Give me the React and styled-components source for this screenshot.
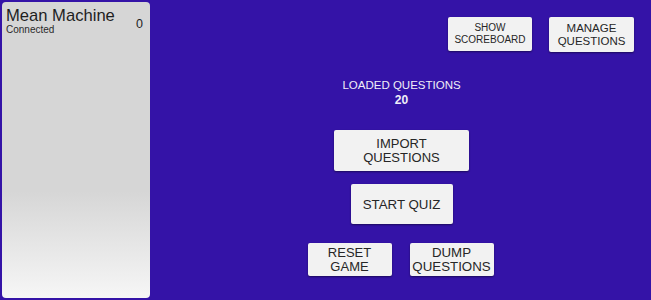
import React from "react";
import styled, { createGlobalStyle } from "styled-components";

const Global = createGlobalStyle`
  html, body { margin: 0; padding: 0; }
  body {
    background: #3413a7;
    font-family: "Liberation Sans", Arial, sans-serif;
  }
`;

const Screen = styled.div`
  display: flex;
  width: 651px;
  height: 300px;
  background: #3413a7;
  overflow: hidden;
`;

const PlayerPanel = styled.div`
  margin: 2px;
  width: 148px;
  height: 296px;
  border-radius: 4px;
  background: linear-gradient(to bottom, #d6d6d6 0%, #d6d6d6 64%, #f6f6f6 100%);
  box-sizing: border-box;
  padding: 6px 7px 0 4px;
  display: flex;
  justify-content: space-between;
  align-items: flex-start;
`;

const NameBlock = styled.div`
  display: flex;
  flex-direction: column;
  color: #1e1e1e;
`;

const PlayerName = styled.div`
  font-size: 16.6px;
  line-height: 16px;
`;

const Status = styled.div`
  font-size: 10px;
  line-height: 11px;
  color: #2a2a2a;
`;

const Score = styled.div`
  font-size: 12.5px;
  line-height: 14px;
  margin-top: 9px;
  color: #1e1e1e;
`;

const Main = styled.div`
  flex: 1;
  display: flex;
  flex-direction: column;
  align-items: center;
`;

const TopBar = styled.div`
  align-self: stretch;
  display: flex;
  justify-content: flex-end;
  gap: 17px;
  padding: 17px 17px 0 0;
`;

const Button = styled.div`
  box-sizing: border-box;
  width: ${p => p.$w}px;
  height: ${p => p.$h}px;
  background: #f2f2f2;
  border-radius: 2px;
  box-shadow: 0 1px 2px rgba(0, 0, 0, 0.45);
  display: flex;
  align-items: center;
  justify-content: center;
  text-align: center;
  color: #262626;
  font-size: ${p => p.$fs}px;
  line-height: ${p => p.$lh}px;
  margin-top: ${p => p.$mt || 0}px;
`;

const Loaded = styled.div`
  margin-top: 26px;
  text-align: center;
  color: #f0eef8;
  font-size: 11.5px;
  line-height: 15px;
`;

const Count = styled.div`
  font-weight: bold;
  font-size: 12px;
`;

const ButtonRow = styled.div`
  display: flex;
  gap: 18px;
  margin-top: 19px;
  margin-right: 2px;
`;

export default function App() {
  return (
    <>
      <Global />
      <Screen>
        <PlayerPanel>
          <NameBlock>
            <PlayerName>Mean Machine</PlayerName>
            <Status>Connected</Status>
          </NameBlock>
          <Score>0</Score>
        </PlayerPanel>
        <Main>
          <TopBar>
            <Button $w={84} $h={34} $fs={10} $lh={12}>
              SHOW<br />SCOREBOARD
            </Button>
            <Button $w={85} $h={35} $fs={11.5} $lh={13}>
              MANAGE<br />QUESTIONS
            </Button>
          </TopBar>
          <Loaded>
            LOADED QUESTIONS
            <Count>20</Count>
          </Loaded>
          <Button $w={135} $h={41} $fs={13} $lh={14} $mt={22}>
            IMPORT<br />QUESTIONS
          </Button>
          <Button $w={102} $h={40} $fs={13.3} $lh={15} $mt={13}>
            START QUIZ
          </Button>
          <ButtonRow>
            <Button $w={84} $h={33} $fs={13} $lh={14}>
              RESET<br />GAME
            </Button>
            <Button $w={84} $h={33} $fs={13.3} $lh={14}>
              DUMP<br />QUESTIONS
            </Button>
          </ButtonRow>
        </Main>
      </Screen>
    </>
  );
}
